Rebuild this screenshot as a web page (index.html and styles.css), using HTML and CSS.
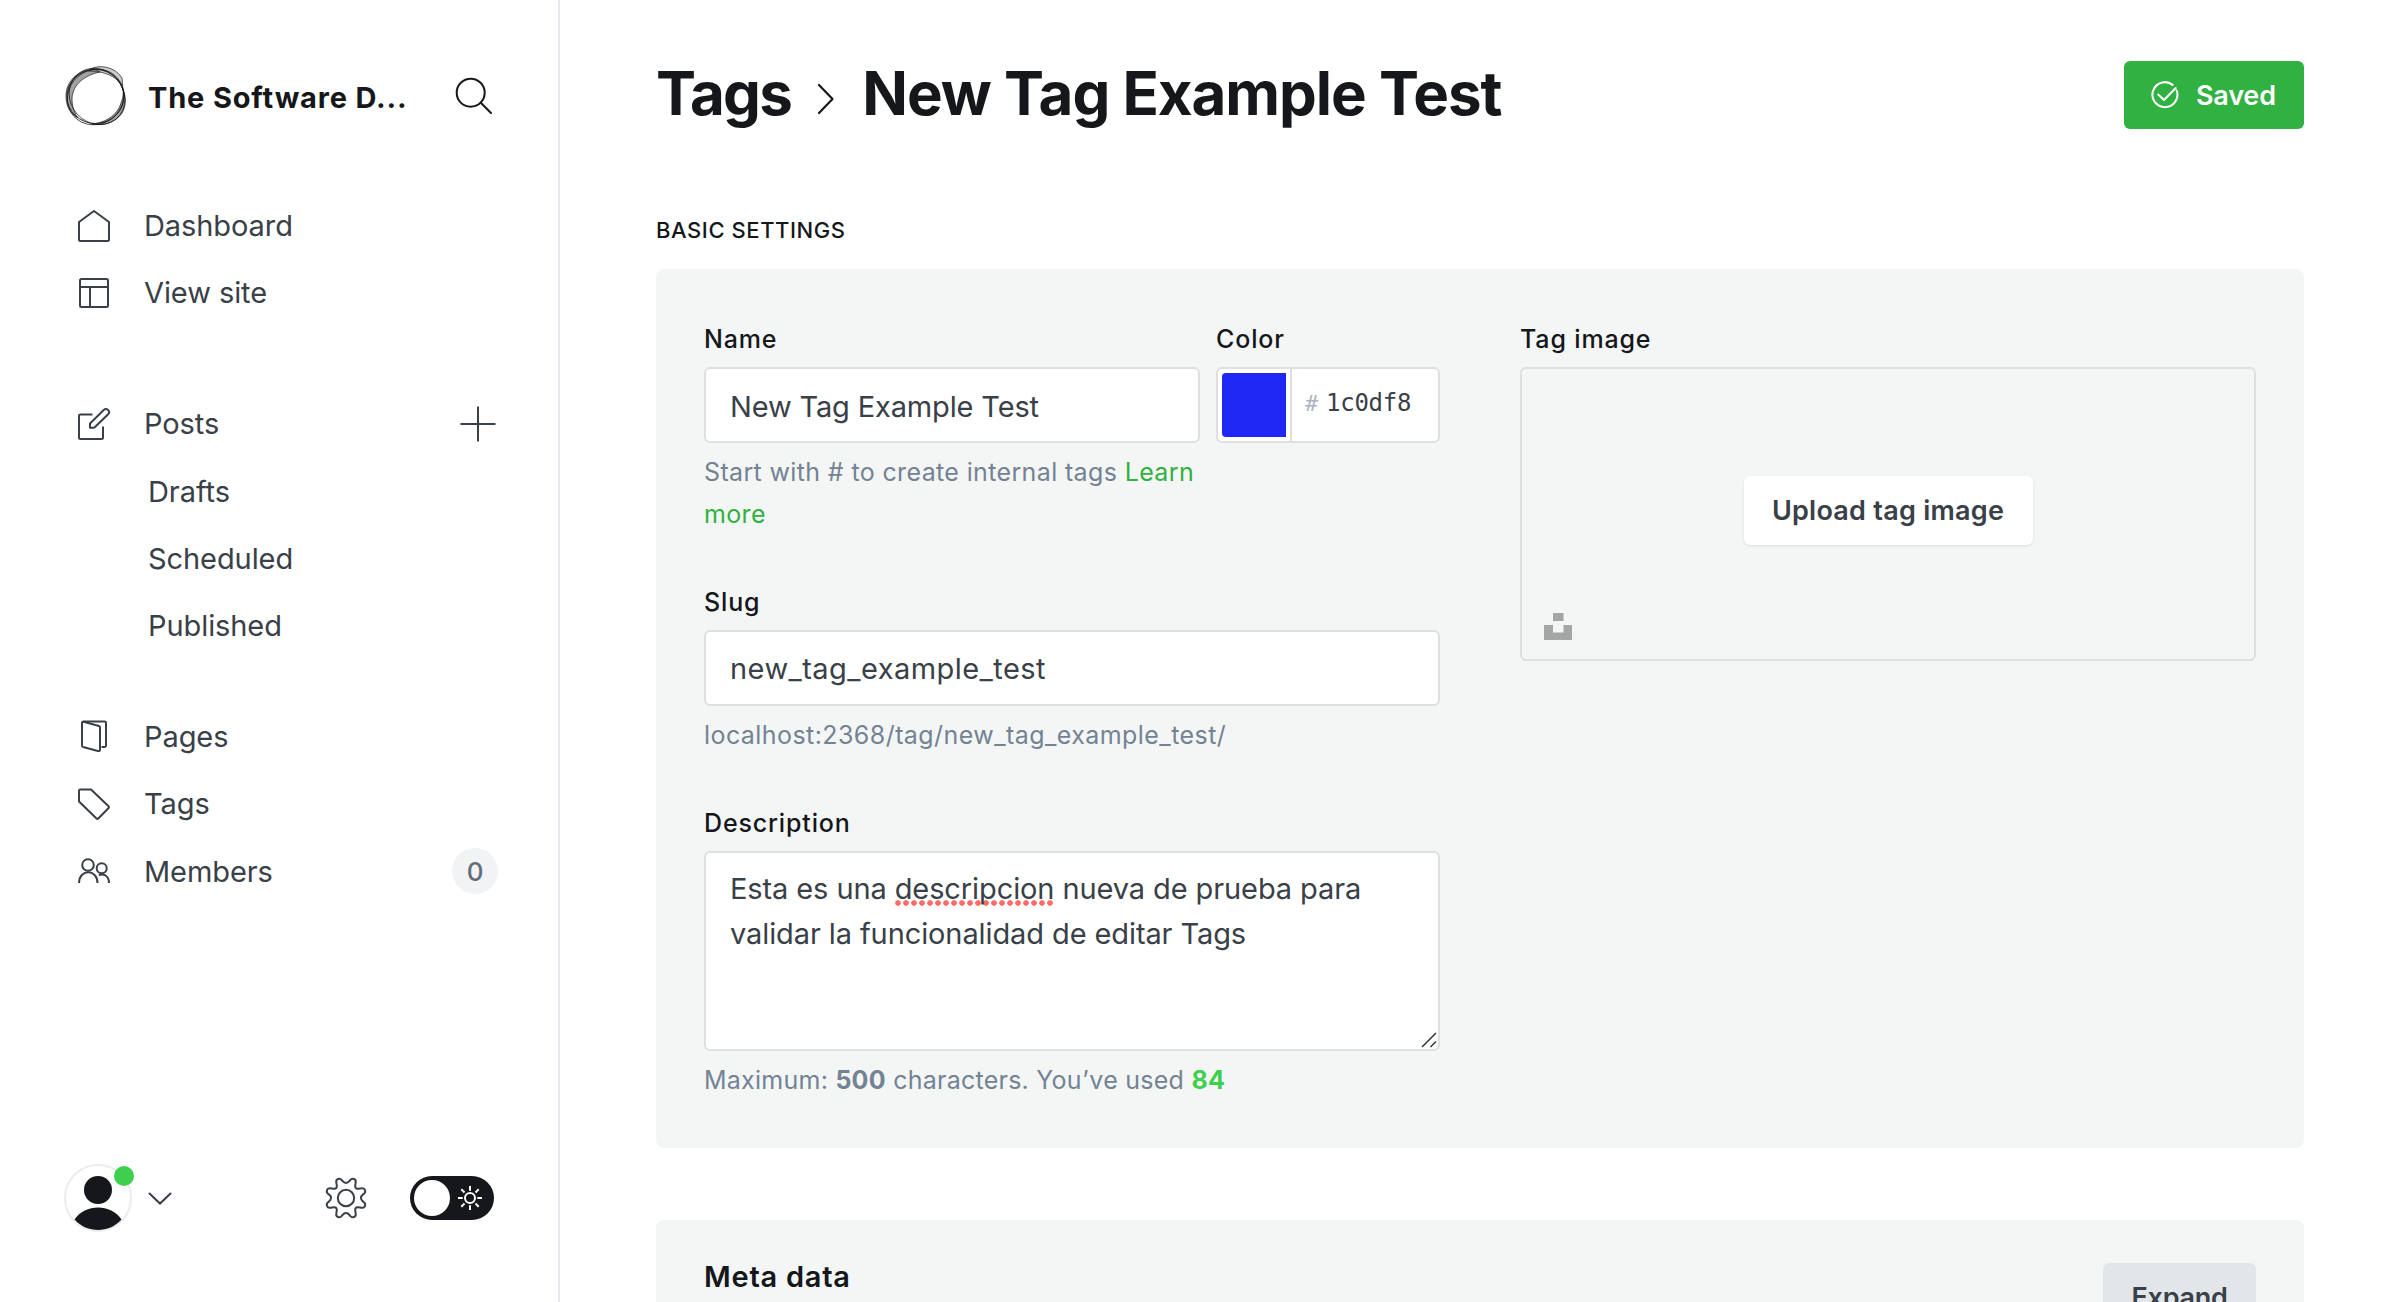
FILE: index.html
```html
<!DOCTYPE html>
<html lang="en">
<head>
<meta charset="utf-8">
<title>Tags - New Tag Example Test</title>
<link rel="stylesheet" href="styles.css">
</head>
<body>
<div class="app">
  <nav class="sidebar">
    <header class="brand">
      <svg class="brand-logo" viewBox="0 0 64 64" width="64" height="64" fill="none" stroke="#15171a">
        <path d="M24 7C31 0 50 1 58 14L59 26C56 17 50 11 36 8Z" fill="#999" fill-opacity=".5" stroke-width=".7"/>
        <path d="M30 5C14 6 2 17 2 32C2 44 8 51 14 54C9 47 8 41 8 34C9 20 21 11 36 8Z" fill="#555" fill-opacity=".55" stroke-width=".7"/>
        <path d="M59 25C64 38 61 51 49 57C42 61 34 61 28 60C40 59 50 53 55 44C58 37 60 32 59 25Z" fill="#666" fill-opacity=".6" stroke-width=".7"/>
        <ellipse cx="31.500" cy="32.500" rx="28.500" ry="27" stroke-width=".9"/>
        <ellipse cx="33" cy="32.500" rx="29.500" ry="26.500" transform="rotate(48 33 32.500)" stroke-width=".7"/>
        <ellipse cx="31.500" cy="33" rx="29" ry="27" transform="rotate(-40 31.500 33)" stroke-width=".7"/>
      </svg>
      <div class="brand-name">The Software D...</div>
      <svg class="brand-search" viewBox="0 0 38 38" width="38" height="38" fill="none" stroke="#15171a" stroke-width="2" stroke-linecap="round"><circle cx="15.7" cy="15.7" r="14"/><path d="M25.8 25.8L36 36"/></svg>
    </header>

    <ul class="nav-list nav-top">
      <li class="nav-item"><svg class="icon" viewBox="0 0 34 34"><path d="M17 2L32 13V30.500a1.500 1.500 0 0 1-1.500 1.500H3.500A1.500 1.500 0 0 1 2 30.500V13Z"/></svg><span>Dashboard</span></li>
      <li class="nav-item"><svg class="icon" viewBox="0 0 34 34"><rect x="3" y="3" width="28" height="28" rx="1.500"/><path d="M3 11H31M13 11V31"/></svg><span>View site</span></li>
    </ul>

    <ul class="nav-list nav-posts">
      <li class="nav-item"><svg class="icon" viewBox="0 0 34 34"><path d="M15.500 7.500H3.500A1.500 1.500 0 0 0 2 9V30.500a1.500 1.500 0 0 0 1.500 1.500H24.500A1.500 1.500 0 0 0 26 30.500V19.500"/><path d="M13 20.800V16.500L26.700 3C29.500 .3 34 4 31.200 7.200L18 20Q17.200 20.800 16 20.800Z"/></svg><span>Posts</span>
        <svg class="plus" viewBox="0 0 36 36" width="36" height="36"><path d="M18 .5V35.500M.5 18H35.500"/></svg></li>
      <li class="nav-item nav-sub">Drafts</li>
      <li class="nav-item nav-sub">Scheduled</li>
      <li class="nav-item nav-sub">Published</li>
    </ul>

    <ul class="nav-list nav-manage">
      <li class="nav-item"><svg class="icon" viewBox="0 0 34 34"><path d="M6 2.500H27.500A1.500 1.500 0 0 1 29 4V26.500a1.500 1.500 0 0 1-1.500 1.500H24.500"/><path d="M6.500 2.800L22 7Q23 7.300 23 8.500V30.500Q23 32.500 21 32L6 28Q5 27.700 5 26.500V4Q5 2.300 6.500 2.800Z"/></svg><span>Pages</span></li>
      <li class="nav-item"><svg class="icon" viewBox="0 0 34 34"><path d="M3.200 2.500H14L31.600 19.300Q32.400 20.200 31.600 21L21.300 31.500Q20.400 32.300 19.500 31.500L2 14.500V3.700Q2 2.500 3.200 2.500Z"/></svg><span>Tags</span></li>
      <li class="nav-item"><svg class="icon" viewBox="0 0 34 34"><circle cx="11" cy="11" r="5.800"/><path d="M2 29C2 14.800 20.500 14.800 20.500 29"/><circle cx="24.700" cy="14.200" r="5"/><path d="M21.800 21.100C27 19.200 32 22 32 29"/></svg><span>Members</span><span class="count">0</span></li>
    </ul>

    <footer class="sidebar-footer">
      <div class="avatar">
        <svg viewBox="0 0 68 68" width="68" height="68"><circle cx="34" cy="34" r="33" fill="#fff" stroke="#e9edf1" stroke-width="2"/><circle cx="34" cy="26" r="14" fill="#15171a"/><path d="M10.500 55.500C21 39.500 47 39.500 57.500 55.500C45 69.500 23 69.500 10.500 55.500Z" fill="#15171a"/></svg>
        <span class="status-dot"></span>
      </div>
      <svg class="caret" viewBox="0 0 24 14" width="24" height="14"><path d="M1.500 1.500L12 11.500L22.500 1.500"/></svg>
      <svg class="gear" viewBox="-21 -21 42 42" width="42" height="42">
        <defs><path id="lobe" d="M0 -15C2.500 -15 3 -16.500 4.300 -18C6 -20.200 10.500 -19.300 9.700 -15.500C9.500 -14 9.100 -13 9.200 -11.500C9.300 -9.800 9.800 -9.300 11.500 -9.200C13 -9.100 14 -9.500 15.500 -9.700C19.300 -10.500 20.200 -6 18 -4.300C16.500 -3 15 -2.500 15 0"/></defs>
        <use href="#lobe"/><use href="#lobe" transform="rotate(90)"/><use href="#lobe" transform="rotate(180)"/><use href="#lobe" transform="rotate(270)"/><circle r="8.200"/>
      </svg>
      <div class="theme-toggle"><span class="knob"></span>
        <svg viewBox="-12 -12 24 24" width="24" height="24"><circle r="5"/><path d="M0-12V-7.300M0 12V7.300M-12 0H-7.300M12 0H7.300M-8.700-8.700L-5.500-5.500M8.700-8.700L5.500-5.500M-8.700 8.700L-5.500 5.500M8.700 8.700L5.500 5.500"/></svg></div>
    </footer>
  </nav>

  <main class="content">
    <header class="page-header">
      <h1 class="page-title"><span class="crumb">Tags</span><svg class="crumb-arrow" viewBox="0 0 18 32" width="18" height="32"><path d="M2 2L15.500 16L2 30"/></svg><span>New Tag Example Test</span></h1>
      <button class="save-button"><svg viewBox="0 0 28 28" width="28" height="28"><path d="M21.700 3.900A12.500 12.500 0 1 0 25.700 9.500"/><path d="M7.200 13.500L13 19L24.700 7"/></svg>Saved</button>
    </header>

    <h4 class="section-heading">Basic settings</h4>
    <section class="card settings">
      <div class="col-fields">
        <div class="name-row">
          <div class="name-field">
            <label class="label">Name</label>
            <input class="input" type="text" value="New Tag Example Test">
            <p class="help">Start with # to create internal tags <a class="link">Learn more</a></p>
          </div>
          <div class="color-field">
            <label class="label">Color</label>
            <div class="color-input"><span class="swatch"></span><span class="hex"><span class="hash">#</span>1c0df8</span></div>
          </div>
        </div>
        <div class="slug-field">
          <label class="label">Slug</label>
          <input class="input slug-input" type="text" value="new_tag_example_test">
          <p class="help url-help">localhost:2368/tag/new_tag_example_test/</p>
        </div>
        <div>
          <label class="label">Description</label>
          <div class="input textarea">Esta es una <span class="misspelled">descripcion</span> nueva de prueba para validar la funcionalidad de editar Tags
            <svg class="grip" viewBox="0 0 16 16" width="16" height="16"><path d="M1 15L15 1M9.500 15L15 9.500"/></svg></div>
          <p class="help max-help">Maximum: <b>500</b> characters. You’ve used <b class="used">84</b></p>
        </div>
      </div>
      <div class="col-image">
        <label class="label">Tag image</label>
        <div class="dropzone">
          <button class="upload-button">Upload tag image</button>
          <svg class="unsplash" viewBox="0 0 28 27" width="28" height="27"><path d="M9 0H19.500V8H9ZM0 12H9V19.500H19.500V12H28V27H0Z"/></svg>
        </div>
      </div>
    </section>

    <section class="card meta">
      <h3 class="meta-title">Meta data</h3>
      <button class="expand-button">Expand</button>
    </section>
  </main>
</div>
</body>
</html>
```
FILE: styles.css
```css
* { box-sizing: border-box; }
body {
  margin: 0;
  height: 1302px;
  overflow: hidden;
  background: #fff;
  color: #15171a;
  font-family: Inter, "Liberation Sans", sans-serif;
}
h1, h3, h4, p, ul { margin: 0; padding: 0; }
ul { list-style: none; }
svg { display: block; flex: none; }
button { border: 0; font-family: inherit; }

.app { display: flex; height: 1302px; overflow: hidden; }

/* Sidebar */
.sidebar {
  display: flex;
  flex-direction: column;
  flex: none;
  width: 560px;
  padding: 64px 60px 70px 64px;
  border-right: 2px solid #e5e9ed;
}
.brand { display: flex; align-items: center; height: 64px; }
.brand-name {
  flex: 1;
  margin-left: 20px;
  padding-top: 3px;
  font-size: 29px;
  font-weight: 700;
  letter-spacing: .84px;
  line-height: 40px;
  white-space: nowrap;
}
.brand-search { margin-right: 5px; }
.nav-item {
  display: flex;
  align-items: center;
  height: 67.3px;
  color: #394047;
  font-size: 29px;
  letter-spacing: -.08px;
}
.nav-top { margin-top: 64px; }
.nav-posts { margin-top: 63.5px; }
.nav-manage { margin-top: 43.5px; }
.icon {
  width: 34px;
  height: 34px;
  margin: 0 33px 0 13px;
  fill: none;
  stroke: #394047;
  stroke-width: 2;
  stroke-linejoin: round;
}
.nav-sub { padding-left: 84px; }
.plus { margin: 1px 2px 0 auto; stroke: #394047; stroke-width: 2; }
.count {
  display: flex;
  align-items: center;
  justify-content: center;
  width: 46px;
  height: 46px;
  margin-left: auto;
  border-radius: 23px;
  background: #f1f3f4;
  color: #626d79;
  font-size: 26px;
  font-weight: 500;
}
.sidebar-footer { display: flex; align-items: center; height: 68px; margin-top: auto; }
.avatar { position: relative; }
.status-dot {
  position: absolute;
  top: 2px;
  left: 50px;
  width: 20px;
  height: 20px;
  border-radius: 50%;
  background: #3dcf4d;
}
.caret { margin: 2px 0 0 16px; fill: none; stroke: #394047; stroke-width: 2; stroke-linecap: round; }
.gear { margin-left: auto; margin-right: 43px; fill: none; stroke: #394047; stroke-width: 2; }
.theme-toggle {
  display: flex;
  align-items: center;
  width: 84px;
  height: 44px;
  margin-right: 4px;
  padding-left: 4px;
  border-radius: 22px;
  background: #15171a;
}
.knob { width: 36px; height: 36px; margin-right: 8px; border-radius: 50%; background: #fff; }
.theme-toggle svg { fill: none; stroke: #fff; stroke-width: 2; }

/* Page header */
.content { width: 1744px; padding: 61px 0 0 96px; flex: none; }
.page-header { display: flex; align-items: center; justify-content: space-between; height: 68px; }
.page-title {
  display: flex;
  align-items: center;
  height: 68px;
  padding-bottom: 4px;
  font-size: 60px;
  font-weight: 700;
  letter-spacing: -1.03px;
  line-height: 64px;
}
.crumb { letter-spacing: -1.7px; }
.crumb-arrow { margin: 12px 27px 0 26px; fill: none; stroke: #15171a; stroke-width: 2.2; stroke-linecap: round; stroke-linejoin: round; }
.save-button {
  display: flex;
  align-items: center;
  width: 180px;
  height: 68px;
  padding: 0 0 0 27px;
  border-radius: 6px;
  background: #30b141;
  color: #fff;
  font-size: 27px;
  font-weight: 600;
  letter-spacing: -.2px;
}
.save-button svg { margin-right: 17px; fill: none; stroke: #fff; stroke-width: 2; stroke-linecap: round; stroke-linejoin: round; }

.section-heading {
  margin: 86px 0 24px;
  font-size: 22px;
  font-weight: 500;
  letter-spacing: .57px;
  line-height: 30px;
  text-transform: uppercase;
}
.card { border-radius: 8px; background: #f4f6f6; }
.settings { display: flex; gap: 80px; height: 879px; padding: 49px 48px 48px; }
.col-fields { width: 736px; }
.col-image { width: 736px; }
.name-row { display: flex; gap: 16px; height: 263px; }
.name-field { width: 496px; }
.color-field { width: 224px; }
.slug-field { height: 221px; }
.label {
  display: block;
  height: 49px;
  font-size: 25px;
  font-weight: 500;
  letter-spacing: .85px;
  line-height: 42px;
}
.input {
  display: block;
  width: 100%;
  height: 76px;
  padding: 2px 24px 0;
  border: 2px solid #dddfe0;
  border-radius: 6px;
  outline: 0;
  background: #fff;
  color: #394047;
  font-family: inherit;
  font-size: 29px;
  letter-spacing: -.15px;
}
.slug-input { letter-spacing: .45px; padding-top: 1px; }
.help {
  margin-top: 8px;
  color: #738393;
  font-size: 25px;
  letter-spacing: .36px;
  line-height: 42px;
}
.url-help { letter-spacing: .43px; }
.max-help { letter-spacing: .25px; }
.link { color: #30b141; }
.used { color: #3dcf4d; }
.color-input {
  display: flex;
  height: 76px;
  border: 2px solid #dddfe0;
  border-radius: 6px;
  background: #fff;
}
.swatch { width: 64px; height: 64px; margin: 4px; border-radius: 4px 0 0 4px; background: #1f27f5; }
.hex {
  flex: 1;
  padding-left: 13px;
  border-left: 2px solid #dddfe0;
  color: #394047;
  font: 24px/69px "DejaVu Sans Mono", monospace;
  letter-spacing: -.25px;
}
.hash { margin-right: 8px; color: #abb4be; font-size: 22px; }
.textarea { position: relative; height: 200px; padding: 13px 24px 0; line-height: 45px; letter-spacing: -.1px; }
.misspelled {
  background: radial-gradient(circle at 3px 3px, #ff6b66 2.4px, transparent 3.2px) 0 100% / 8px 6px repeat-x;
}
.grip { position: absolute; right: 1px; bottom: 1px; fill: none; stroke: #333; stroke-width: 1.5; }
.dropzone {
  position: relative;
  display: flex;
  align-items: center;
  justify-content: center;
  height: 294px;
  border: 2px solid #dddfe0;
  border-radius: 6px;
}
.upload-button {
  width: 289px;
  height: 69px;
  margin-top: -8px;
  padding: 0;
  border-radius: 6px;
  background: #fff;
  box-shadow: 0 1px 3px rgba(0, 0, 0, .1);
  color: #394047;
  font-size: 27px;
  font-weight: 600;
  letter-spacing: .25px;
}
.unsplash { position: absolute; left: 22px; bottom: 19px; fill: #a3a6a5; }
.meta { display: flex; justify-content: space-between; margin-top: 72px; padding: 43px 48px; height: 200px; }
.meta-title {
  padding-top: 3px;
  font-size: 29px;
  font-weight: 600;
  letter-spacing: .75px;
  line-height: 22px;
}
.expand-button {
  width: 153px;
  height: 68px;
  padding: 0;
  border-radius: 6px;
  background: #e3e6e9;
  color: #394047;
  font-size: 27px;
  font-weight: 600;
  letter-spacing: -.3px;
}
```
